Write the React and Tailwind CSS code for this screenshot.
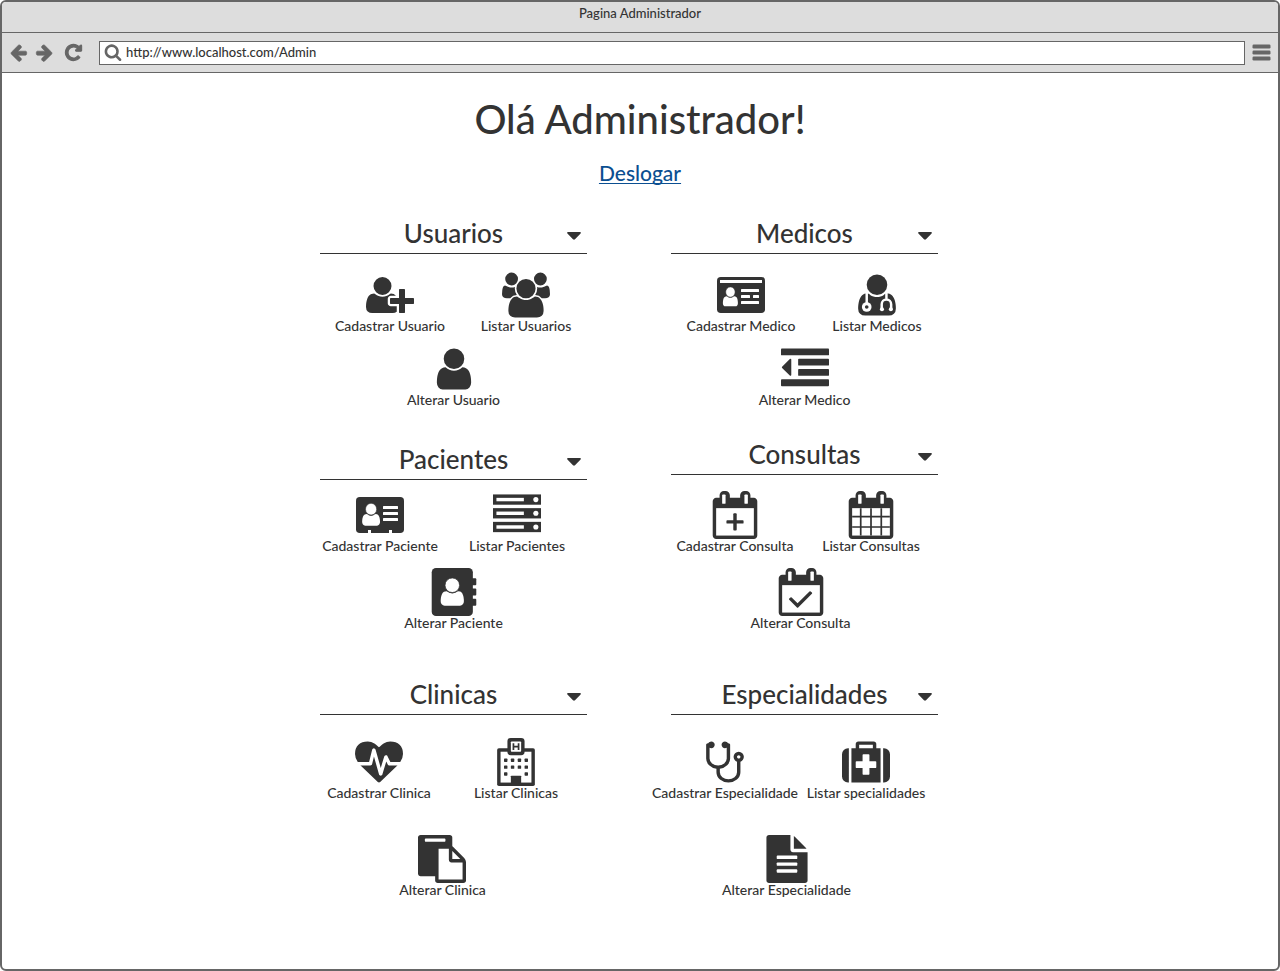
import { useState } from "react";

const BODY =
  "M1664 1533q0 120-73 189.5t-194 69.5h-874q-121 0-194-69.5t-73-189.5q0-53 3.5-103.5t14-109 26.5-108.5 43-97.5 62-81 85.5-53.5 111.5-20q10 0 43 21.5t73 48 107 48 135 21.5 135-21.5 107-48 73-48 43-21.5q61 0 111.5 20t85.5 53.5 62 81 43 97.5 26.5 108.5 14 109 3.5 103.5z";
const BUST =
  "M980 864q46 0 82.5 17t60 47.5 39.5 67 24 81 11.5 82.5 3.5 79q0 67-39.5 118.5t-105.5 51.5h-576q-66 0-105.5-51.5t-39.5-118.5q0-48 4.5-93.5t18.5-98.5 36.5-91.5 63-64.5 93.5-26h5q7 4 32 19.5t35.5 21 33 17 37 16 35 9 39.5 4.5 39.5-4.5 35-9 37-16 33-17 35.5-21 32-19.5z";
const CALENDAR =
  "M1728 384v1280q0 52-38 90t-90 38h-1408q-52 0-90-38t-38-90v-1280q0-52 38-90t90-38h128v-96q0-66 47-113t113-47h64q66 0 113 47t47 113v96h384v-96q0-66 47-113t113-47h64q66 0 113 47t47 113v96h128q52 0 90 38t38 90z";
const ARROW =
  "M1664 896v128q0 53-32.5 90.5t-84.5 37.5h-704l293 294q38 36 38 90t-38 90l-75 76q-37 37-90 37-52 0-91-37l-651-652q-37-37-37-90 0-52 37-91l651-650q38-38 91-38 52 0 90 38l75 74q38 38 38 91t-38 91l-293 293h704q52 0 84.5 37.5t32.5 90.5z";

function Svg({ size = "h-12 w-12", box = "0 0 1792 1792", children }) {
  return (
    <svg viewBox={box} className={`${size} shrink-0 fill-current`} aria-hidden="true">
      {children}
    </svg>
  );
}

function CalendarFrame({ children }) {
  return (
    <Svg>
      <path d={CALENDAR} />
      <g className="fill-white">
        <rect x="416" y="128" width="128" height="352" rx="32" />
        <rect x="1248" y="128" width="128" height="352" rx="32" />
        <rect x="192" y="640" width="1408" height="1024" />
      </g>
      {children}
    </Svg>
  );
}

function Person({ transform }) {
  return (
    <g transform={transform} className="fill-white">
      <path d={BUST} />
      <circle cx="768" cy="644" r="272" className="stroke-[#333]" strokeWidth="28" />
    </g>
  );
}

const icons = {
  userPlus: (
    <Svg box="0 0 2048 1792">
      <path d="M704 896q-159 0-271.5-112.5t-112.5-271.5 112.5-271.5 271.5-112.5 271.5 112.5 112.5 271.5-112.5 271.5-271.5 112.5zm960 128h352q13 0 22.5 9.5t9.5 22.5v192q0 13-9.5 22.5t-22.5 9.5h-352v352q0 13-9.5 22.5t-22.5 9.5h-192q-13 0-22.5-9.5t-9.5-22.5v-352h-352q-13 0-22.5-9.5t-9.5-22.5v-192q0-13 9.5-22.5t22.5-9.5h352v-352q0-13 9.5-22.5t22.5-9.5h192q13 0 22.5 9.5t9.5 22.5v352zm-736 224q0 52 38 90t90 38h256v238q-68 50-171 50h-874q-121 0-194-69t-73-190q0-53 3.5-103.5t14-109 26.5-108.5 43-97.5 62-81 85.5-53.5 111.5-20q19 0 39 17 79 61 154.5 91.5t164.5 30.5 164.5-30.5 154.5-91.5q20-17 39-17 132 0 217 96h-223q-52 0-90 38t-38 90v192z" />
    </Svg>
  ),
  users: (
    <Svg box="0 0 1920 1792">
      <path d="M593 896q-162 5-265 128h-134q-82 0-138-40.5t-56-118.5q0-353 124-353 6 0 43.5 21t97.5 42.5 119 21.5q67 0 133-23-5 37-5 66 0 139 81 256zm1071 637q0 120-73 189.5t-194 69.5h-874q-121 0-194-69.5t-73-189.5q0-53 3.5-103.5t14-109 26.5-108.5 43-97.5 62-81 85.5-53.5 111.5-20q10 0 43 21.5t73 48 107 48 135 21.5 135-21.5 107-48 73-48 43-21.5q61 0 111.5 20t85.5 53.5 62 81 43 97.5 26.5 108.5 14 109 3.5 103.5zm-1024-1277q0 106-75 181t-181 75-181-75-75-181 75-181 181-75 181 75 75 181zm704 384q0 159-112.5 271.5t-271.5 112.5-271.5-112.5-112.5-271.5 112.5-271.5 271.5-112.5 271.5 112.5 112.5 271.5zm576 225q0 78-56 118.5t-138 40.5h-134q-103-123-265-128 81-117 81-256 0-29-5-66 66 23 133 23 59 0 119-21.5t97.5-42.5 43.5-21q124 0 124 353zm-128-609q0 106-75 181t-181 75-181-75-75-181 75-181 181-75 181 75 75 181z" />
    </Svg>
  ),
  user: (
    <Svg>
      <path d="M1536 1399q0 109-62.5 187t-150.5 78h-854q-88 0-150.5-78t-62.5-187q0-85 8.5-160.5t31.5-152 58.5-131 94-89 134.5-34.5q131 128 313 128t313-128q76 0 134.5 34.5t94 89 58.5 131 31.5 152 8.5 160.5zm-256-887q0 159-112.5 271.5t-271.5 112.5-271.5-112.5-112.5-271.5 112.5-271.5 271.5-112.5 271.5 112.5 112.5 271.5z" />
    </Svg>
  ),
  idCard: (
    <Svg box="0 0 2048 1792">
      <rect y="128" width="2048" height="1536" rx="160" />
      <Person transform="translate(3 254) scale(.74 .8)" />
      <g className="fill-white">
        <rect x="128" y="256" width="1792" height="128" />
        <rect x="1024" y="640" width="768" height="128" rx="24" />
        <rect x="1024" y="896" width="384" height="128" rx="24" />
        <rect x="1536" y="896" width="256" height="128" rx="24" />
        <rect x="1024" y="1152" width="768" height="128" rx="24" />
      </g>
    </Svg>
  ),
  userMd: (
    <Svg>
      <circle cx="896" cy="512" r="384" />
      <path d={BODY} transform="translate(-64 -128)" />
      <g className="fill-none stroke-white" strokeWidth="92">
        <path d="M512 780v440M1248 780v280M1072 1430v-190a176 176 0 0 1 352 0v190" />
      </g>
      <g className="fill-white">
        <circle cx="512" cy="1344" r="180" />
        <circle cx="1082" cy="1430" r="76" />
        <circle cx="1414" cy="1430" r="76" />
      </g>
      <circle cx="512" cy="1344" r="68" />
    </Svg>
  ),
  outdent: (
    <Svg>
      <path d="M384 544v576q0 13-9.5 22.5t-22.5 9.5q-14 0-23-9l-288-288q-9-9-9-23t9-23l288-288q9-9 23-9 13 0 22.5 9.5t9.5 22.5z" />
      <rect y="128" width="1792" height="256" rx="32" />
      <rect x="640" y="512" width="1152" height="256" rx="32" />
      <rect x="640" y="896" width="1152" height="256" rx="32" />
      <rect y="1280" width="1792" height="256" rx="32" />
    </Svg>
  ),
  addressCard: (
    <Svg box="0 0 2048 1792">
      <rect y="128" width="2048" height="1536" rx="160" />
      <Person transform="translate(-32 54) scale(.88 .92)" />
      <g className="fill-white">
        <rect x="1152" y="512" width="640" height="128" rx="24" />
        <rect x="1152" y="768" width="640" height="128" rx="24" />
        <rect x="1152" y="1024" width="640" height="128" rx="24" />
        <rect x="512" y="1536" width="128" height="140" />
        <rect x="1408" y="1536" width="128" height="140" />
      </g>
    </Svg>
  ),
  server: (
    <Svg>
      {[128, 640, 1152].map((y) => (
        <g key={y}>
          <rect y={y} width="1792" height="384" />
          <rect x="128" y={y + 128} width="1024" height="128" className="fill-white" />
          <circle cx="1600" cy={y + 192} r="96" className="fill-white" />
        </g>
      ))}
    </Svg>
  ),
  addressBook: (
    <Svg box="-64 0 1792 1792">
      <rect width="1536" height="1792" rx="160" />
      <rect x="1440" y="384" width="224" height="256" rx="32" />
      <rect x="1440" y="768" width="224" height="256" rx="32" />
      <rect x="1440" y="1152" width="224" height="256" rx="32" />
      <Person />
    </Svg>
  ),
  calendarPlus: (
    <CalendarFrame>
      <rect x="832" y="832" width="128" height="640" rx="32" />
      <rect x="576" y="1088" width="640" height="128" rx="32" />
    </CalendarFrame>
  ),
  calendar: (
    <CalendarFrame>
      <path d="M480 640h64v1024h-64zM864 640h64v1024h-64zM1248 640h64v1024h-64zM192 928h1408v64h-1408zM192 1312h1408v64h-1408z" />
    </CalendarFrame>
  ),
  calendarCheck: (
    <CalendarFrame>
      <path d="M1303 964l-512 512q-10 9-23 9t-23-9l-288-288q-9-10-9-23t9-22l46-46q9-9 22-9t23 9l220 220 444-444q10-9 23-9t22 9l46 46q9 9 9 22t-9 23z" />
    </CalendarFrame>
  ),
  heartbeat: (
    <Svg>
      <path d="M1280 1024h305q-5 6-10 10.5t-9 7.5l-3 4-623 600q-18 18-44 18t-44-18l-624-602q-5-2-21-20h369q22 0 39.5-13.5t22.5-34.5l70-281 190 667q6 20 23 33t39 13q21 0 38-13t23-33l146-485 56 112q18 35 57 35zm512-428q0 145-103 300h-369l-111-221q-8-17-25.5-27t-36.5-8q-45 5-56 46l-129 430-196-686q-6-20-23.5-33t-39.5-13-39 13.5-22 34.5l-116 464h-423q-103-155-103-300 0-220 127-344t351-124q62 0 126.5 21.5t120 58 95.5 68.5 76 68q36-36 76-68t95.5-68.5 120-58 126.5-21.5q224 0 351 124t127 344z" />
    </Svg>
  ),
  hospital: (
    <Svg>
      <rect x="192" y="384" width="1408" height="1408" rx="64" />
      <rect x="320" y="512" width="1152" height="1152" className="fill-white" />
      <rect x="576" width="640" height="640" rx="128" />
      <rect x="704" y="128" width="384" height="384" rx="32" className="fill-white" />
      <path d="M768 192h64v96h128v-96h64v256h-64v-96h-128v96h-64z" />
      {[768, 1024].map((y) =>
        [448, 704, 960, 1216].map((x) => <rect key={x + "-" + y} x={x} y={y} width="128" height="128" rx="24" />)
      )}
      <rect x="448" y="1280" width="128" height="128" rx="24" />
      <rect x="1216" y="1280" width="128" height="128" rx="24" />
      <rect x="704" y="1408" width="384" height="300" rx="24" />
    </Svg>
  ),
  paste: (
    <Svg>
      <path d="M768 1664h896v-640h-416q-40 0-68-28t-28-68v-416h-384v1152zm256-1440v-64q0-13-9.5-22.5t-22.5-9.5h-704q-13 0-22.5 9.5t-9.5 22.5v64q0 13 9.5 22.5t22.5 9.5h704q13 0 22.5-9.5t9.5-22.5zm256 672h299l-299-299v299zm512 128v672q0 40-28 68t-68 28h-960q-40 0-68-28t-28-68v-160h-544q-40 0-68-28t-28-68v-1344q0-40 28-68t68-28h1088q40 0 68 28t28 68v328q21 13 36 28l408 408q28 28 48 76t20 88z" />
    </Svg>
  ),
  stethoscope: (
    <Svg>
      <path d="M1472 704q0-26-19-45t-45-19-45 19-19 45 19 45 45 19 45-19 19-45zm128 0q0 62-35.5 111t-92.5 70v395q0 159-131.5 271.5t-316.5 112.5-316.5-112.5-131.5-271.5v-132q-164-20-274-128t-110-252v-512q0-26 19-45t45-19q6 0 16 2 17-30 47-48t65-18q53 0 90.5 37.5t37.5 90.5-37.5 90.5-90.5 37.5q-33 0-64-18v402q0 106 94 181t226 75 226-75 94-181v-402q-31 18-64 18-53 0-90.5-37.5t-37.5-90.5 37.5-90.5 90.5-37.5q35 0 65 18t47 48q10-2 16-2 26 0 45 19t19 45v512q0 144-110 252t-274 128v132q0 106 94 181t226 75 226-75 94-181v-395q-57-21-92.5-70t-35.5-111q0-80 56-136t136-56 136 56 56 136z" />
    </Svg>
  ),
  medkit: (
    <Svg>
      <path d="M1280 1088v-192q0-14-9-23t-23-9h-224v-224q0-14-9-23t-23-9h-192q-14 0-23 9t-9 23v224h-224q-14 0-23 9t-9 23v192q0 14 9 23t23 9h224v224q0 14 9 23t23 9h192q14 0 23-9t9-23v-224h224q14 0 23-9t9-23zm-640-704h512v-128h-512v128zm-384 0v1280h-32q-92 0-158-66t-66-158v-832q0-92 66-158t158-66h32zm1184 0v1280h-1088v-1280h160v-160q0-40 28-68t68-28h576q40 0 68 28t28 68v160h160zm352 224v832q0 92-66 158t-158 66h-32v-1280h32q92 0 158 66t66 158z" />
    </Svg>
  ),
  fileText: (
    <Svg>
      <path d="M1596 476q14 14 28 36h-472v-472q22 14 36 28zm-476 164h544v1056q0 40-28 68t-68 28h-1344q-40 0-68-28t-28-68v-1600q0-40 28-68t68-28h800v544q0 40 28 68t68 28z" />
      <g className="fill-white">
        <rect x="512" y="768" width="768" height="128" rx="32" />
        <rect x="512" y="1024" width="768" height="128" rx="32" />
        <rect x="512" y="1280" width="768" height="128" rx="32" />
      </g>
    </Svg>
  ),
};

const columns = [
  [
    {
      title: "Usuarios",
      space: "pb-[33px]",
      row: "ml-0.5 mt-[17px] grid-cols-[136px_136px]",
      last: "mt-3",
      items: [["userPlus", "Cadastrar Usuario"], ["users", "Listar Usuarios"], ["user", "Alterar Usuario"]],
    },
    {
      title: "Pacientes",
      space: "pb-[45px]",
      row: "-ml-2 mt-[11px] grid-cols-[136px_138px]",
      last: "mt-[15px]",
      items: [["addressCard", "Cadastrar Paciente"], ["server", "Listar Pacientes"], ["addressBook", "Alterar Paciente"]],
    },
    {
      title: "Clinicas",
      space: "pb-0",
      row: "-ml-2.5 mt-[23px] grid-cols-[138px_136px]",
      last: "mt-[35px] pr-[22px]",
      items: [["heartbeat", "Cadastrar Clinica"], ["hospital", "Listar Clinicas"], ["paste", "Alterar Clinica"]],
    },
  ],
  [
    {
      title: "Medicos",
      space: "pb-7",
      row: "ml-0.5 mt-[17px] grid-cols-[136px_136px]",
      last: "mt-3",
      items: [["idCard", "Cadastrar Medico"], ["userMd", "Listar Medicos"], ["outdent", "Alterar Medico"]],
    },
    {
      title: "Consultas",
      space: "pb-[45px]",
      row: "-ml-1 mt-4 grid-cols-[136px_136px]",
      last: "mt-[15px] pr-2",
      items: [["calendarPlus", "Cadastrar Consulta"], ["calendar", "Listar Consultas"], ["calendarCheck", "Alterar Consulta"]],
    },
    {
      title: "Especialidades",
      space: "pb-0",
      row: "-ml-4 mt-[23px] grid-cols-[140px_142px]",
      last: "mt-[35px] pr-9",
      items: [["stethoscope", "Cadastrar Especialidade"], ["medkit", "Listar specialidades"], ["fileText", "Alterar Especialidade"]],
    },
  ],
];

function Item({ icon, label }) {
  return (
    <a href="#" className="flex flex-col items-center">
      {icons[icon]}
      <span className="whitespace-nowrap text-sm leading-[14px]">{label}</span>
    </a>
  );
}

function Section({ title, space, row, last, items }) {
  const [open, setOpen] = useState(true);
  const [first, second, third] = items;
  return (
    <section className={space}>
      <h2 className="border-b border-[#333]">
        <button
          type="button"
          aria-expanded={open}
          onClick={() => setOpen(!open)}
          className="grid h-[39px] w-full grid-cols-[1fr_auto_1fr] items-center text-[26px] leading-[39px]"
        >
          <span className="col-start-2">{title}</span>
          <svg viewBox="0 0 14 8" className="mr-1.5 mt-1 h-2 w-3.5 justify-self-end fill-current" aria-hidden="true">
            <path d="M1 0h12q1.4.2.6 1.4l-5.6 5.9q-1 .9-2 0l-5.6-5.9q-.8-1.2.6-1.4z" />
          </svg>
        </button>
      </h2>
      {open && (
        <>
          <div className={`grid ${row}`}>
            <Item icon={first[0]} label={first[1]} />
            <Item icon={second[0]} label={second[1]} />
          </div>
          <div className={`flex justify-center ${last}`}>
            <Item icon={third[0]} label={third[1]} />
          </div>
        </>
      )}
    </section>
  );
}

function Toolbar() {
  const [url, setUrl] = useState("http://www.localhost.com/Admin");
  return (
    <div className="flex h-10 items-center border-b border-[#666] bg-[#ddd] pl-[7px] pr-1.5 text-[#666]">
      <button type="button" aria-label="Voltar">
        <Svg size="h-[19px] w-[19px]">
          <path d={ARROW} className="stroke-current" strokeWidth="60" />
        </Svg>
      </button>
      <button type="button" aria-label="Avançar" className="ml-[7px]">
        <Svg size="h-[19px] w-[19px]">
          <path d={ARROW} transform="translate(1792 0) scale(-1 1)" className="stroke-current" strokeWidth="60" />
        </Svg>
      </button>
      <button type="button" aria-label="Recarregar" className="ml-2.5">
        <Svg size="h-[19px] w-[19px]">
          <path
            className="stroke-current"
            strokeWidth="100"
            d="M1664 256v448q0 26-19 45t-45 19h-448q-42 0-59-40-17-39 14-69l138-138q-148-137-349-137-104 0-198.5 40.5t-163.5 109.5-109.5 163.5-40.5 198.5 40.5 198.5 109.5 163.5 163.5 109.5 198.5 40.5q119 0 225-52t179-147q7-10 23-12 15 0 25 9l137 138q9 8 9.5 20.5t-7.5 22.5q-109 132-264 204.5t-327 72.5q-156 0-298-61t-245-164-164-245-61-298 61-298 164-245 245-164 298-61q147 0 284.5 55.5t244.5 156.5l130-129q29-31 70-14 39 17 39 59z"
          />
        </Svg>
      </button>
      <label className="ml-4 flex h-6 flex-1 items-center gap-1 border border-[#666] bg-white pl-1">
        <Svg size="h-[18px] w-[18px]">
          <path d="M1216 832q0-185-131.5-316.5t-316.5-131.5-316.5 131.5-131.5 316.5 131.5 316.5 316.5 131.5 316.5-131.5 131.5-316.5zm512 832q0 52-38 90t-90 38q-54 0-90-38l-343-342q-179 124-399 124-143 0-273.5-55.5t-225-150-150-225-55.5-273.5 55.5-273.5 150-225 225-150 273.5-55.5 273.5 55.5 225 150 150 225 55.5 273.5q0 220-124 399l343 343q37 37 37 90z" transform="translate(0 -96)" />
        </Svg>
        <input
          type="text"
          aria-label="Endereço"
          value={url}
          onChange={(e) => setUrl(e.target.value)}
          className="min-w-0 flex-1 bg-transparent text-[13px] text-[#333] outline-none"
        />
      </label>
      <button type="button" aria-label="Menu" className="ml-1.5">
        <Svg size="h-[21px] w-[21px]">
          <rect x="128" y="220" width="1536" height="330" rx="100" />
          <rect x="128" y="732" width="1536" height="330" rx="100" />
          <rect x="128" y="1244" width="1536" height="330" rx="100" />
        </Svg>
      </button>
    </div>
  );
}

export default function App() {
  return (
    <div className="flex min-h-screen flex-col overflow-hidden rounded-md border-2 border-[#666] bg-white font-['Lato',sans-serif] font-medium text-[#333]">
      <header>
        <div className="h-[31px] border-b border-[#666] bg-[#ddd] text-center text-[13px] leading-[23px]">
          Pagina Administrador
        </div>
        <Toolbar />
      </header>
      <main className="flex flex-1 flex-col items-center pt-[22px]">
        <h1 className="text-[40px] leading-[48px]">Olá Administrador!</h1>
        <a
          href="#"
          className="mt-4 text-[21px] leading-7 text-[#0b4f91] underline decoration-1 underline-offset-2 [text-decoration-skip-ink:none]"
        >
          Deslogar
        </a>
        <div className="mt-[27px] grid w-[640px] max-w-full grid-cols-[267px_267px] gap-x-[84px]">
          {columns.map((sections, i) => (
            <div key={i}>
              {sections.map((s) => (
                <Section key={s.title} {...s} />
              ))}
            </div>
          ))}
        </div>
      </main>
    </div>
  );
}
